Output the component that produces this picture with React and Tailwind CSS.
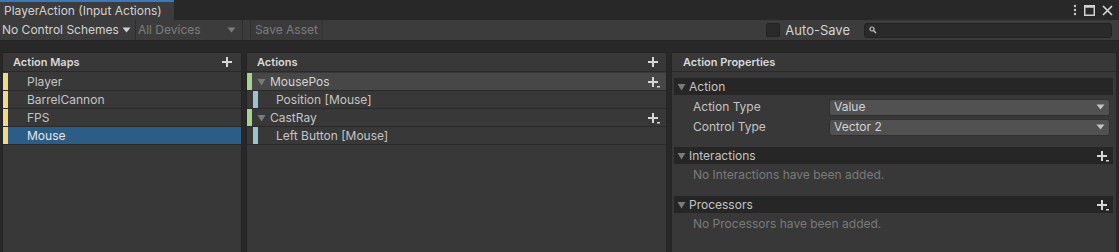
import React from "react";

const font = { fontFamily: "Inter, 'Noto Sans', 'Liberation Sans', sans-serif" };

function Plus({ more }) {
  return (
    <svg width="14" height="14" viewBox="0 0 14 14" className="shrink-0">
      <path d="M6 2h2v4h4v2H8v4H6V8H2V6h4z" fill="#d6d6d6" />
      {more && <rect x="11" y="11" width="3" height="1.5" fill="#d6d6d6" />}
    </svg>
  );
}

function Tri() {
  return (
    <svg width="9" height="8" viewBox="0 0 9 8" className="shrink-0">
      <path d="M0.5 1h8L4.5 7.5z" fill="#7a7a7a" />
    </svg>
  );
}

function Dropdown({ value }) {
  return (
    <div className="flex-1 h-[17px] bg-[#515151] rounded-[3px] border border-[#303030] flex items-center px-[4px] text-[12px] text-[#d2d2d2]">
      <span className="flex-1">{value}</span>
      <svg width="9" height="6" viewBox="0 0 9 6"><path d="M0.5 0.5h8L4.5 5.5z" fill="#c4c4c4" /></svg>
    </div>
  );
}

function FoldHeader({ label, plus }) {
  return (
    <div className="h-[17px] bg-[#262626] flex items-center pl-[3px] pr-[4px] gap-[3px] text-[12px] text-[#c4c4c4]">
      <Tri />
      <span className="flex-1">{label}</span>
      {plus && <Plus more />}
    </div>
  );
}

export default function App() {
  const maps = ["Player", "BarrelCannon", "FPS", "Mouse"];
  return (
    <div style={font} className="w-[1119px] h-[252px] bg-[#282828] flex flex-col overflow-hidden text-[#c4c4c4] whitespace-nowrap">
      {/* title bar */}
      <div className="h-[20px] flex items-stretch bg-[#282828]">
        <div className="w-[174px] bg-[#3c3c3c] border-t-2 border-[#3a79bb] flex items-center pl-[4px] text-[12px] text-[#d2d2d2] leading-none">
          PlayerAction (Input Actions)
        </div>
        <div className="flex-1" />
        <div className="flex items-center gap-[7px] pr-[6px] text-[#d0d0d0]">
          <svg width="4" height="12" viewBox="0 0 4 12"><circle cx="2" cy="2" r="1.2" fill="#c8c8c8"/><circle cx="2" cy="6" r="1.2" fill="#c8c8c8"/><circle cx="2" cy="10" r="1.2" fill="#c8c8c8"/></svg>
          <svg width="11" height="11" viewBox="0 0 11 11"><rect x="0.75" y="0.75" width="9.5" height="9.5" fill="none" stroke="#d0d0d0" strokeWidth="1.5"/><rect x="0.75" y="0.75" width="9.5" height="2" fill="#d0d0d0"/></svg>
          <svg width="11" height="11" viewBox="0 0 11 11"><path d="M1 1l9 9M10 1l-9 9" stroke="#d8d8d8" strokeWidth="1.6"/></svg>
        </div>
      </div>
      {/* toolbar */}
      <div className="h-[21px] bg-[#3c3c3c] border-b border-[#232323] flex items-center text-[12px] leading-none">
        <div className="flex items-center gap-[3px] pl-[2px] pr-[4px] h-full text-[#d2d2d2] border-r border-[#2e2e2e]">
          No Control Schemes
          <svg width="9" height="6" viewBox="0 0 9 6"><path d="M0.5 0.5h8L4.5 5.5z" fill="#d2d2d2" /></svg>
        </div>
        <div className="w-[107px] flex items-center pl-[2px] pr-[6px] h-full text-[#7c7c7c] border-r border-[#2e2e2e]">
          <span className="flex-1">All Devices</span>
          <svg width="9" height="6" viewBox="0 0 9 6"><path d="M0.5 0.5h8L4.5 5.5z" fill="#7c7c7c" /></svg>
        </div>
        <div className="ml-[7px] h-full flex items-center px-[4px] bg-[#3a3a3a] border-x border-[#333] text-[#7c7c7c]">Save Asset</div>
        <div className="flex-1" />
        <div className="w-[14px] h-[14px] bg-[#2a2a2a] border border-[#222] rounded-[2px]" />
        <span className="ml-[5px] text-[13px] text-[#d2d2d2]">Auto-Save</span>
        <div className="ml-[14px] mr-[7px] w-[248px] h-[15px] bg-[#2a2a2a] rounded-[3px] border border-[#222] flex items-center pl-[4px]">
          <svg width="8" height="8" viewBox="0 0 8 8"><circle cx="3" cy="3" r="2" fill="none" stroke="#c4c4c4" strokeWidth="1.2"/><path d="M4.5 4.5L7 7" stroke="#c4c4c4" strokeWidth="1.4"/></svg>
        </div>
      </div>
      {/* content */}
      <div className="flex-1 flex pt-[11px] pl-[2px] pr-[2px] gap-[4px] min-h-0">
        {/* action maps */}
        <div className="w-[240px] bg-[#383838] border border-[#242424] border-b-0 rounded-t-[2px] flex flex-col">
          <div className="h-[19px] flex items-center justify-between pl-[10px] pr-[7px] border-b border-[#2a2a2a] text-[11px] font-semibold text-[#d8d8d8]">
            <span>Action Maps</span>
            <Plus />
          </div>
          <div className="mt-[1px]">
            {maps.map((m, i) => (
              <div key={m} className={`h-[18px] flex items-stretch border-b border-[#2a2a2a] ${i === 3 ? "bg-[#2c5d87] text-[#e6e6e6]" : ""}`}>
                <div className="w-[5px] bg-[#f2d98a]" />
                <span className="pl-[19px] text-[12px] flex items-center">{m}</span>
              </div>
            ))}
          </div>
        </div>
        {/* actions */}
        <div className="w-[421px] bg-[#383838] border border-[#242424] border-b-0 rounded-t-[2px] flex flex-col">
          <div className="h-[19px] flex items-center justify-between pl-[10px] pr-[6px] border-b border-[#2a2a2a] text-[11px] font-semibold text-[#d8d8d8]">
            <span>Actions</span>
            <Plus />
          </div>
          <div className="mt-[1px]">
            <div className="h-[18px] flex items-stretch bg-[#474747] border-b border-[#2a2a2a]">
              <div className="w-[5px] bg-[#a6d48e]" />
              <div className="flex items-center gap-[4px] pl-[5px] flex-1 text-[12px] text-[#d2d2d2]"><Tri />MousePos</div>
              <div className="flex items-center pr-[6px]"><Plus more /></div>
            </div>
            <div className="h-[18px] flex items-stretch border-b border-[#2a2a2a]">
              <div className="w-[6px]" />
              <div className="w-[5px] bg-[#9ac3cd]" />
              <span className="pl-[18px] flex items-center text-[12px]">Position [Mouse]</span>
            </div>
            <div className="h-[18px] flex items-stretch border-b border-[#2a2a2a]">
              <div className="w-[5px] bg-[#a6d48e]" />
              <div className="flex items-center gap-[4px] pl-[5px] flex-1 text-[12px]"><Tri />CastRay</div>
              <div className="flex items-center pr-[6px]"><Plus more /></div>
            </div>
            <div className="h-[18px] flex items-stretch border-b border-[#2a2a2a]">
              <div className="w-[6px]" />
              <div className="w-[5px] bg-[#9ac3cd]" />
              <span className="pl-[18px] flex items-center text-[12px]">Left Button [Mouse]</span>
            </div>
          </div>
        </div>
        {/* properties */}
        <div className="flex-1 bg-[#383838] border border-[#242424] border-b-0 rounded-t-[2px] flex flex-col">
          <div className="h-[19px] flex items-center pl-[11px] border-b border-[#2a2a2a] text-[11px] font-semibold text-[#d8d8d8]">
            <span>Action Properties</span>
          </div>
          <div className="pt-[6px] pl-[2px] pr-[3px] flex flex-col">
            <FoldHeader label="Action" />
            <div className="flex items-center h-[20px] mt-[2px] pl-[19px] pr-[3px]">
              <span className="w-[136px] text-[12px]">Action Type</span>
              <Dropdown value="Value" />
            </div>
            <div className="flex items-center h-[20px] pl-[19px] pr-[3px]">
              <span className="w-[136px] text-[12px]">Control Type</span>
              <Dropdown value="Vector 2" />
            </div>
            <div className="mt-[10px]">
              <FoldHeader label="Interactions" plus />
              <div className="h-[22px] flex items-center pl-[19px] text-[12px] text-[#7a7a7a]">No Interactions have been added.</div>
            </div>
            <div className="mt-[10px]">
              <FoldHeader label="Processors" plus />
              <div className="h-[22px] flex items-center pl-[19px] text-[12px] text-[#7a7a7a]">No Processors have been added.</div>
            </div>
          </div>
        </div>
      </div>
    </div>
  );
}
